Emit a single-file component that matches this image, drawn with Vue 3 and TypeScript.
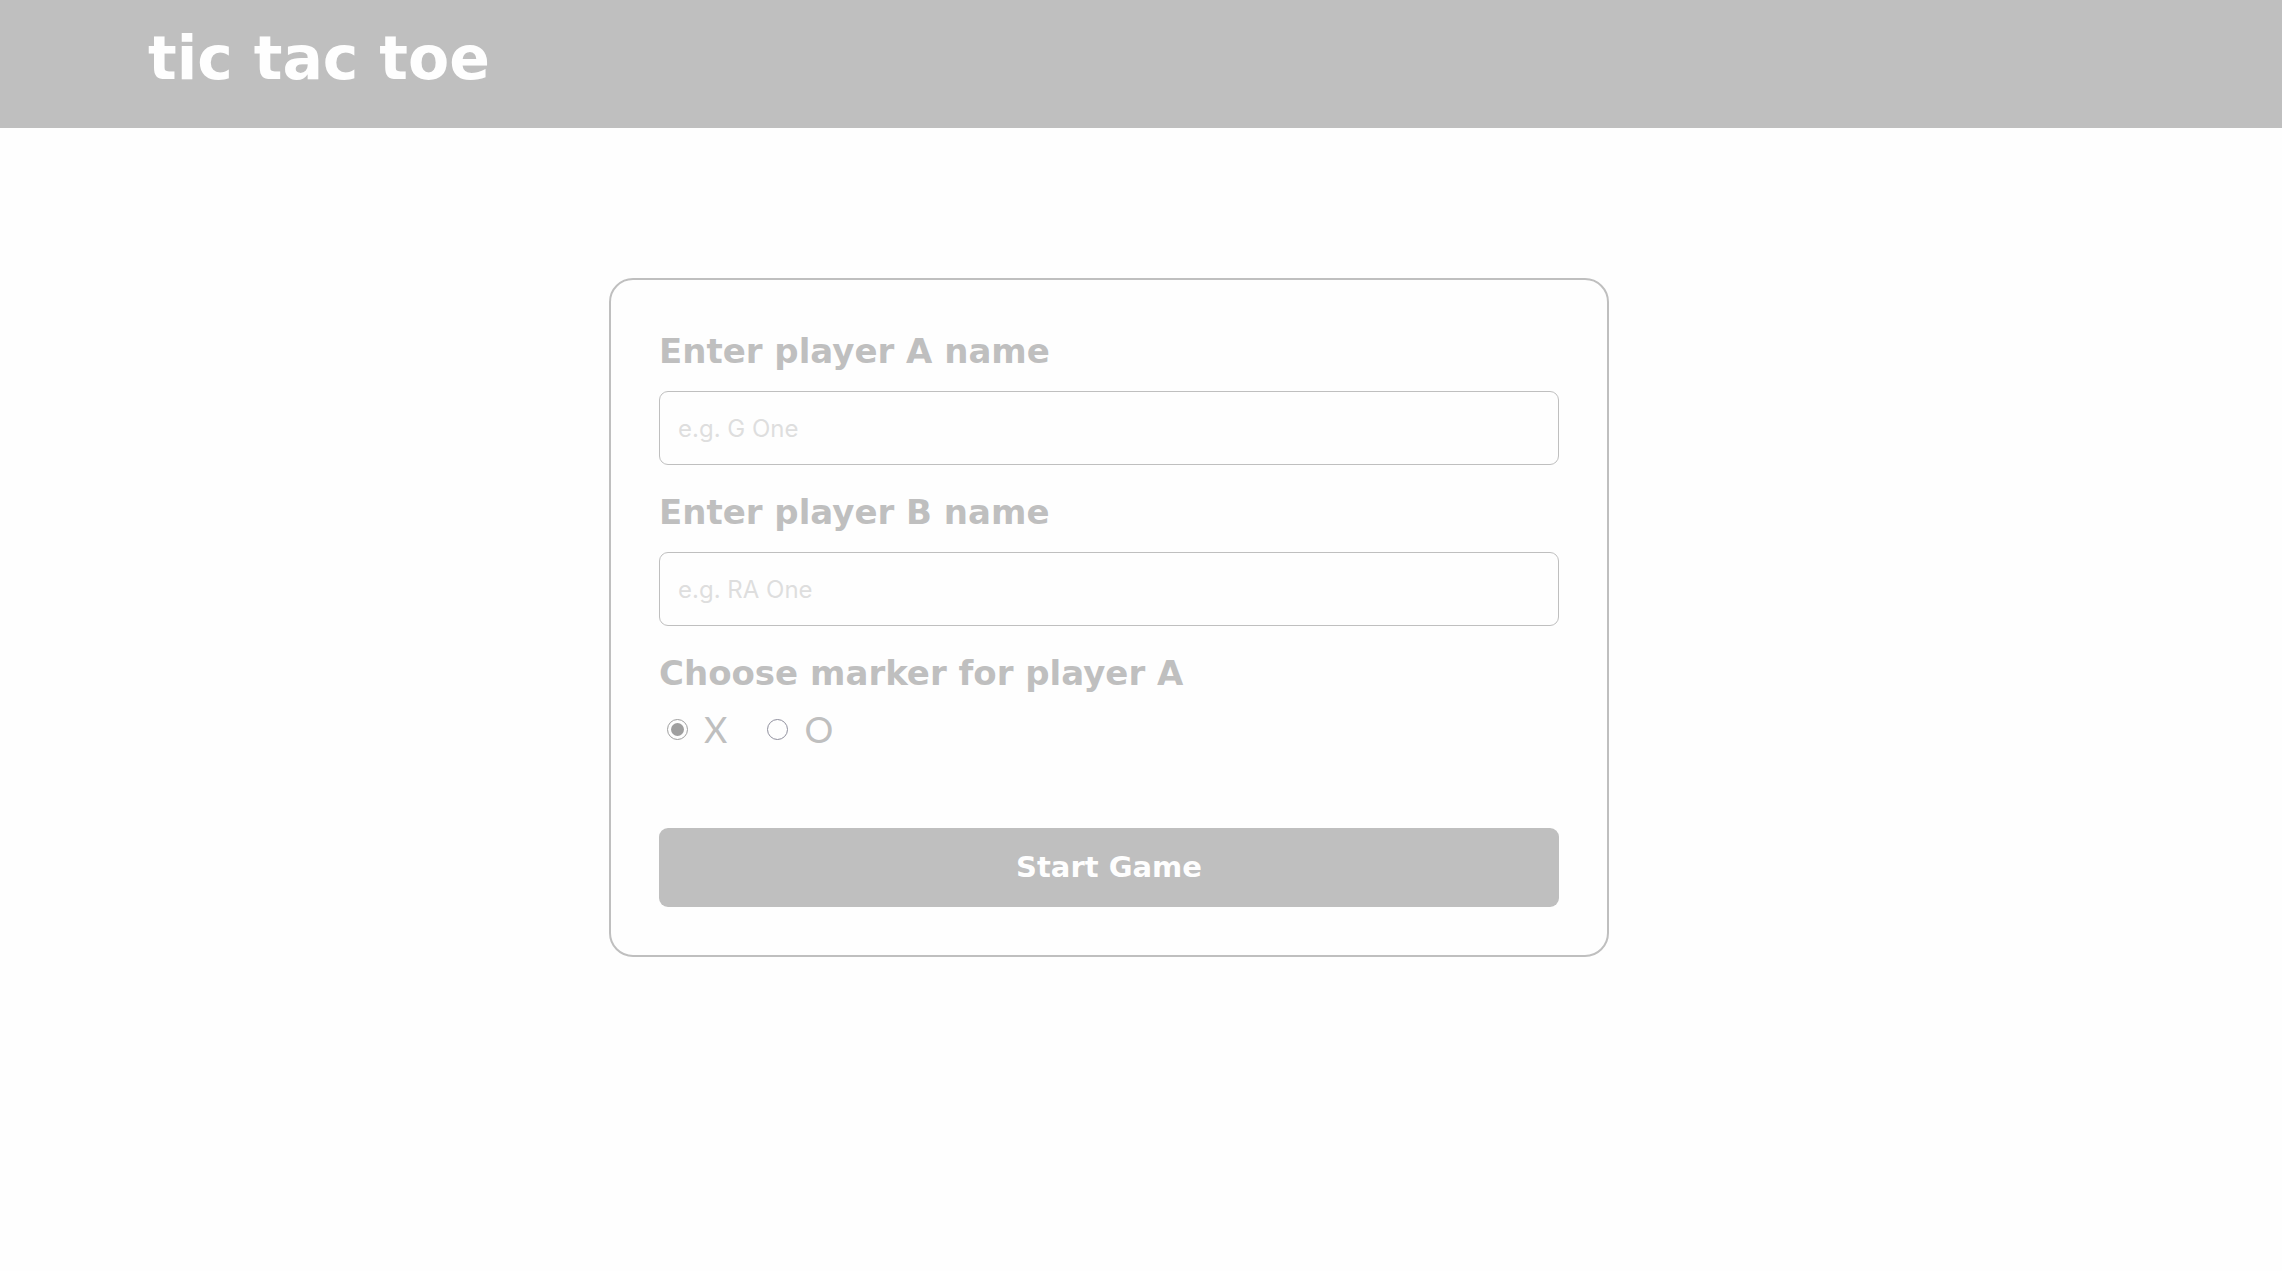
<script setup lang="ts">
import { ref } from 'vue'

type Marker = 'X' | 'O'

const markers: Marker[] = ['X', 'O']
const playerA = ref('')
const playerB = ref('')
const marker = ref<Marker>('X')
</script>

<template>
  <div class="page">
    <header class="header">
      <h1 class="title">tic tac toe</h1>
    </header>
    <main class="main">
      <form class="card" @submit.prevent>
        <label class="label" for="player-a">Enter player A name</label>
        <input id="player-a" v-model="playerA" class="field" type="text" placeholder="e.g. G One" />
        <label class="label" for="player-b">Enter player B name</label>
        <input id="player-b" v-model="playerB" class="field" type="text" placeholder="e.g. RA One" />
        <fieldset class="group">
          <legend class="label">Choose marker for player A</legend>
          <div class="options">
            <label v-for="m in markers" :key="m" class="option">
              <input v-model="marker" class="radio" type="radio" name="marker" :value="m" />
              <span>{{ m }}</span>
            </label>
          </div>
        </fieldset>
        <button class="start" type="submit">Start Game</button>
      </form>
    </main>
  </div>
</template>

<style>
body {
  margin: 0;
  background: #fefefe;
}
</style>

<style scoped>
.page {
  color: #bfbfbf;
  font-family: Inter, sans-serif;
}
.header {
  box-sizing: border-box;
  padding: 22px 148px 34px;
  background: #bfbfbf;
}
.title {
  margin: 0;
  color: #fefefe;
  font: bold 60px/72px "DejaVu Sans", sans-serif;
}
.main {
  padding: 150px 212px 48px 148px;
}
.card {
  box-sizing: border-box;
  display: flex;
  flex-direction: column;
  max-width: 1000px;
  margin: 0 auto;
  padding: 48px;
  border: 2px solid #bfbfbf;
  border-radius: 24px;
}
.label {
  padding: 0;
  font: bold 34px/46px "DejaVu Sans", sans-serif;
}
.field {
  box-sizing: border-box;
  width: 100%;
  height: 74px;
  margin: 17px 0 24px;
  padding: 0 18px;
  border: 1px solid #bfbfbf;
  border-radius: 9px;
  outline: none;
  background: transparent;
  color: #bfbfbf;
  font: 24px/36px Inter, sans-serif;
}
.field::placeholder {
  color: #dedede;
  opacity: 1;
}
.group {
  min-width: 0;
  margin: 0;
  padding: 0;
  border: 0;
}
.options {
  display: flex;
  gap: 40px;
  padding: 3px 0 0 8px;
}
.option {
  display: flex;
  align-items: center;
  gap: 16px;
  font: 36px/60px Lato, sans-serif;
}
.radio {
  appearance: none;
  display: grid;
  place-items: center;
  box-sizing: border-box;
  width: 21px;
  height: 21px;
  margin: 0;
  border: 1px solid #8f8f9d;
  border-radius: 50%;
}
.radio:checked {
  border-color: #9f9f9f;
}
.radio:checked::before {
  content: "";
  width: 13px;
  height: 13px;
  border-radius: 50%;
  background: #9f9f9f;
}
.start {
  height: 79px;
  margin: 69px 0 0;
  padding: 0 0 2px;
  border: 0;
  border-radius: 9px;
  background: #bfbfbf;
  color: #fefefe;
  font: bold 29px/36px "DejaVu Sans", sans-serif;
}
</style>
